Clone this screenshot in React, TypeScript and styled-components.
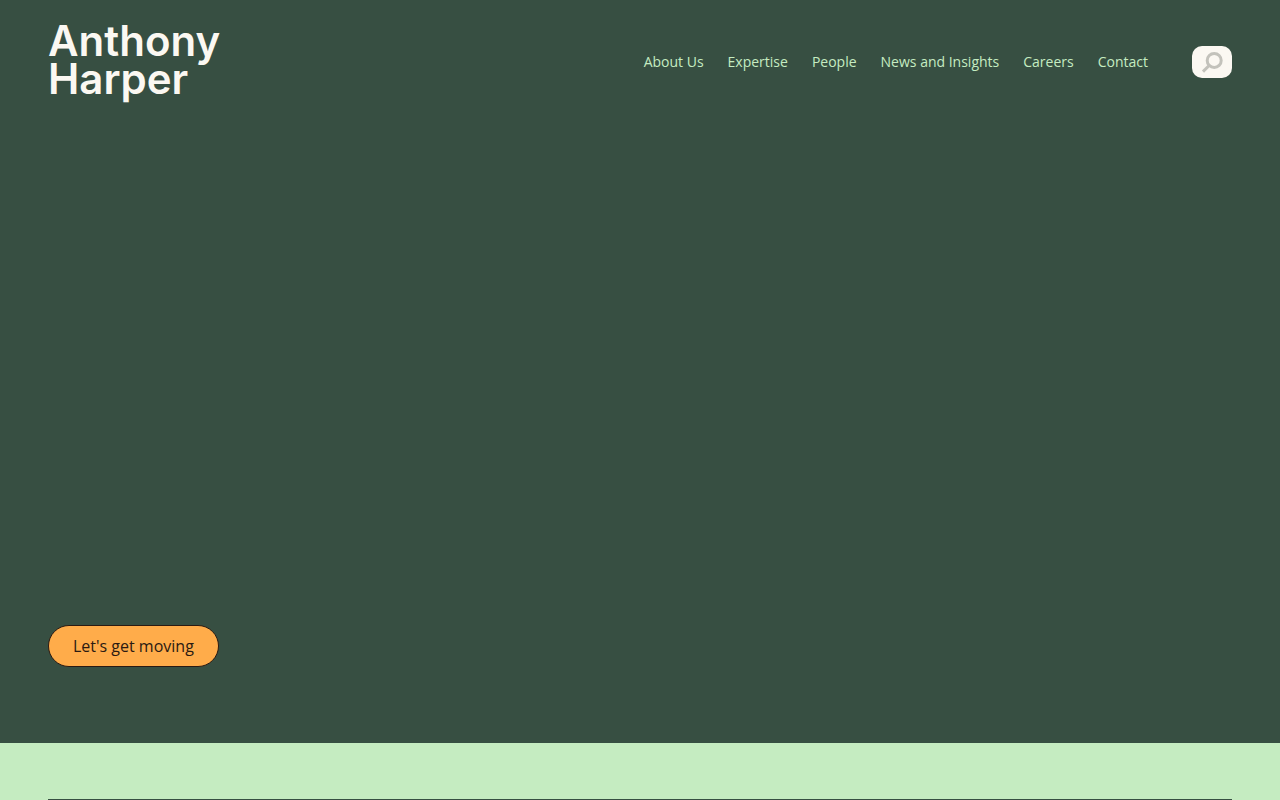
import React from 'react';
import styled, { createGlobalStyle } from 'styled-components';

const GlobalStyle = createGlobalStyle`
  *, *::before, *::after { box-sizing: border-box; }
  body {
    margin: 0;
    background: #c5ecc1;
    font-family: "Open Sans", "Noto Sans", sans-serif;
  }
`;

const Hero = styled.div`
  display: flex;
  flex-direction: column;
  min-height: calc(100vh - 57px);
  padding: 0 48px 76px;
  background: #374f42;
`;

const Header = styled.header`
  display: flex;
  align-items: center;
  justify-content: space-between;
  height: 124px;
`;

const Logo = styled.a`
  padding-bottom: 4px;
  color: #fbf8f2;
  font-family: Inter, "Liberation Sans", sans-serif;
  font-size: 42px;
  font-weight: 600;
  line-height: 38px;
  text-decoration: none;
`;

const HeaderRight = styled.div`
  display: flex;
  align-items: center;
  gap: 44px;
`;

const NavList = styled.ul`
  display: flex;
  gap: 24px;
  margin: 0;
  padding: 0;
  list-style: none;
`;

const NavItem = styled.li`
  display: flex;
`;

const NavLink = styled.a`
  color: #c5ecc1;
  font-size: 14px;
  line-height: 20px;
  white-space: nowrap;
  text-decoration: none;
`;

const SearchButton = styled.button`
  display: flex;
  align-items: center;
  justify-content: center;
  width: 40px;
  height: 32px;
  padding: 0;
  border: 0;
  border-radius: 10px;
  background: #fbf8f2;
  cursor: pointer;
`;

const HeroMain = styled.main`
  display: flex;
  flex: 1;
  align-items: flex-end;
`;

const CallToAction = styled.a`
  padding: 8px 24px;
  border: 1px solid #2b1a12;
  border-radius: 21px;
  background: #ffac4a;
  color: #2b1a12;
  font-size: 16px;
  line-height: 24px;
  text-decoration: none;
`;

const Lower = styled.section`
  padding: 56px 48px 0;
  background: #c5ecc1;
`;

const Divider = styled.hr`
  height: 1px;
  margin: 0;
  border: 0;
  background: #374f42;
`;

const links = ['About Us', 'Expertise', 'People', 'News and Insights', 'Careers', 'Contact'];

export default function App() {
  return (
    <>
      <GlobalStyle />
      <Hero>
        <Header>
          <Logo href="#">
            Anthony
            <br />
            Harper
          </Logo>
          <HeaderRight>
            <nav aria-label="Main">
              <NavList>
                {links.map((label) => (
                  <NavItem key={label}>
                    <NavLink href="#">{label}</NavLink>
                  </NavItem>
                ))}
              </NavList>
            </nav>
            <SearchButton type="button" aria-label="Search">
              <svg width="22" height="22" viewBox="0 0 22 22" fill="none" stroke="#c3c2bb" strokeWidth="3">
                <circle cx="13.2" cy="9.4" r="7" />
                <path d="M8.4 14.2L2 20.6" />
              </svg>
            </SearchButton>
          </HeaderRight>
        </Header>
        <HeroMain>
          <CallToAction href="#">Let's get moving</CallToAction>
        </HeroMain>
      </Hero>
      <Lower>
        <Divider />
      </Lower>
    </>
  );
}
